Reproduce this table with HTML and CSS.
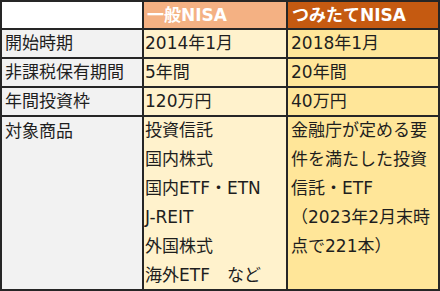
FILE: index.html
```html
<!DOCTYPE html>
<html lang="ja">
<head>
<meta charset="utf-8">
<link rel="stylesheet" href="styles.css">
</head>
<body>
<div class="table">
  <div class="cell head blank"></div>
  <div class="cell head ippan">一般NISA</div>
  <div class="cell head tsumi">つみたてNISA</div>

  <div class="cell label">開始時期</div>
  <div class="cell c2">2014年1月</div>
  <div class="cell c3">2018年1月</div>

  <div class="cell label">非課税保有期間</div>
  <div class="cell c2">5年間</div>
  <div class="cell c3">20年間</div>

  <div class="cell label">年間投資枠</div>
  <div class="cell c2">120万円</div>
  <div class="cell c3">40万円</div>

  <div class="cell label tall">対象商品</div>
  <div class="cell c2 tall">
    <div class="line">投資信託</div>
    <div class="line">国内株式</div>
    <div class="line">国内ETF・ETN</div>
    <div class="line">J-REIT</div>
    <div class="line">外国株式</div>
    <div class="line">海外ETF　など</div>
  </div>
  <div class="cell c3 tall">
    <div class="line">金融庁が定める要</div>
    <div class="line">件を満たした投資</div>
    <div class="line">信託・ETF</div>
    <div class="line">（2023年2月末時</div>
    <div class="line">点で221本）</div>
  </div>
</div>
</body>
</html>
```
FILE: styles.css
```css
html, body {
  margin: 0;
  padding: 0;
  background: #ffffff;
}

.table {
  display: grid;
  grid-template-columns: 140px 142px 150px;
  grid-template-rows: 26px 27px 27px 27px 172px;
  gap: 2px;
  padding: 2px;
  width: 440px;
  height: 291px;
  box-sizing: border-box;
  background: #262626;
  font-family: "DejaVu Sans", "Noto Sans CJK JP", sans-serif;
  font-size: 17px;
  color: #1e1e1e;
}

.cell {
  line-height: 27px;
  white-space: nowrap;
  overflow: hidden;
}

.head {
  line-height: 26px;
  font-weight: bold;
  color: #ffffff;
}

.blank { background: #ffffff; }
.ippan { background: #f4b183; padding-left: 3px; }
.tsumi { background: #c55a11; padding-left: 4px; }

.label { background: #f2f2f2; padding-left: 3px; }
.c2 { background: #fff2cc; padding-left: 1px; }
.c3 { background: #ffe699; padding-left: 3px; }

.tall {
  line-height: 29px;
}

.tall .line:first-child {
  margin-top: -1px;
}
```
